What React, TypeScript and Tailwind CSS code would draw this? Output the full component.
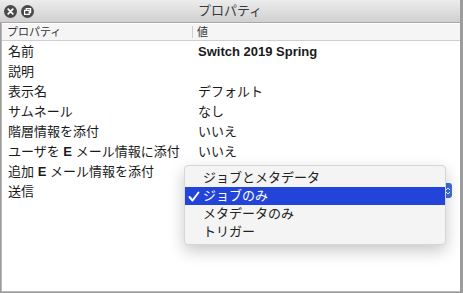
import React from 'react';

const ROWS: { label: React.ReactNode; value?: React.ReactNode }[] = [
  { label: '名前', value: <span className="font-bold">Switch 2019 Spring</span> },
  { label: '説明' },
  { label: '表示名', value: 'デフォルト' },
  { label: 'サムネール', value: 'なし' },
  { label: '階層情報を添付', value: 'いいえ' },
  { label: <>ユーザを <b>E</b> メール情報に添付</>, value: 'いいえ' },
  { label: <>追加 <b>E</b> メール情報を添付</> },
  { label: '送信' },
];

const MENU = ['ジョブとメタデータ', 'ジョブのみ', 'メタデータのみ', 'トリガー'];

export default function App() {
  return (
    <div
      className="relative w-[463px] h-[293px] flex flex-col bg-[#9c9c9c] pr-[3px] overflow-hidden"
      style={{ fontFamily: '"Liberation Sans", "Noto Sans CJK JP", sans-serif' }}
    >
      {/* title bar */}
      <div className="relative h-[23px] flex items-center bg-gradient-to-b from-[#ececec] to-[#d0d0d0] border-b border-[#a8a8a8]">
        <div className="flex items-center gap-[4px] pl-[4px]">
          <svg width="13" height="13" viewBox="0 0 13 13">
            <circle cx="6.5" cy="6.5" r="6.5" fill="#4a4a4a" />
            <path d="M4.2 4.2 L8.8 8.8 M8.8 4.2 L4.2 8.8" stroke="#fff" strokeWidth="1.8" strokeLinecap="round" />
          </svg>
          <svg width="13" height="13" viewBox="0 0 13 13">
            <circle cx="6.5" cy="6.5" r="6.5" fill="#4a4a4a" />
            <rect x="3.6" y="5.4" width="4.6" height="4" fill="none" stroke="#fff" strokeWidth="1.2" />
            <path d="M5.2 5.4 V3.6 H9.6 V7.6 H8.2" fill="none" stroke="#fff" strokeWidth="1.2" />
          </svg>
        </div>
        <div className="absolute inset-0 flex items-center justify-center text-[13px] text-[#3a3a3a]">プロパティ</div>
      </div>

      {/* content */}
      <div className="flex-1 bg-white border-l border-b border-[#b8b8b8] ml-[1px] mb-[1px]">
        <div className="h-[17px] flex items-center bg-[#f5f5f5] border-b border-[#cfcfcf] text-[11px] text-[#333] mt-[1px]">
          <div className="w-[191px] pl-[5px] border-r border-[#cfcfcf] h-[12px] leading-[12px]">プロパティ</div>
          <div className="pl-[4px]">値</div>
        </div>
        <div className="pt-[1px]">
          {ROWS.map((r, i) => (
            <div key={i} className="h-[20px] flex items-center text-[13px] text-[#1a1a1a]">
              <div className="w-[192px] pl-[6px] whitespace-nowrap">{r.label}</div>
              <div className="pl-[4px] whitespace-nowrap">{r.value}</div>
            </div>
          ))}
        </div>
      </div>

      {/* popup button stub */}
      <div className="absolute left-[440px] top-[183px] w-[12px] h-[15px] rounded-[3px] bg-[#3d6fe0] flex items-center justify-end pr-[1px]">
        <svg width="6" height="10" viewBox="0 0 6 10">
          <path d="M1 4 L3 2 L5 4 M1 6 L3 8 L5 6" fill="none" stroke="#fff" strokeWidth="1" />
        </svg>
      </div>

      {/* popup menu */}
      <div className="absolute left-[184px] top-[165px] w-[262px] py-[3px] rounded-[4px] bg-[#f4f4f4] border border-[#d6d6d6] shadow-[0_6px_16px_rgba(0,0,0,0.22)] text-[13px] text-[#222]">
        {MENU.map((m, i) => {
          const sel = i === 1;
          return (
            <div
              key={m}
              className={`h-[18px] flex items-center ${sel ? 'bg-[#2344d8] text-white' : ''}`}
            >
              <div className="w-[18px] flex justify-center">
                {sel && (
                  <svg width="12" height="11" viewBox="0 0 12 11">
                    <path d="M1.5 6 L4.5 9.5 L10.5 1.5" fill="none" stroke="#fff" strokeWidth="2" strokeLinecap="round" strokeLinejoin="round" />
                  </svg>
                )}
              </div>
              <span>{m}</span>
            </div>
          );
        })}
      </div>
    </div>
  );
}
